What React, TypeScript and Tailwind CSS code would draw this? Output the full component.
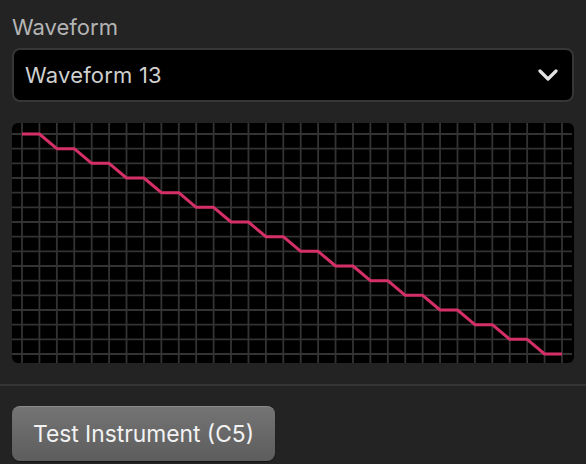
const samples = Array.from({ length: 32 }, (_, i) => 15 - Math.floor(i / 2));

const W = 560;
const H = 240;
const PAD_X = 10;
const TOP = 11;
const STEP_X = 540 / 31;
const STEP_Y = 220 / 15;

const WaveformCanvas = () => {
  const pts = samples.map((v, i) => `${(PAD_X + i * STEP_X).toFixed(2)},${(TOP + (15 - v) * STEP_Y).toFixed(2)}`).join(' ');
  return (
    <div className="h-[240px] w-full overflow-hidden rounded-md bg-black">
      <svg width={W} height={H} viewBox={`0 0 ${W} ${H}`}>
        {samples.map((_, i) => (
          <line key={`v${i}`} x1={PAD_X + i * STEP_X} y1={0} x2={PAD_X + i * STEP_X} y2={H} stroke="#333333" strokeWidth={1.8} />
        ))}
        {Array.from({ length: 16 }, (_, k) => (
          <line key={`h${k}`} x1={0} y1={TOP + k * STEP_Y} x2={W} y2={TOP + k * STEP_Y} stroke="#333333" strokeWidth={1.8} />
        ))}
        <polyline points={pts} fill="none" stroke="#d43067" strokeWidth={3} strokeLinejoin="round" />
      </svg>
    </div>
  );
};

export default function App() {
  return (
    <div className="h-[464px] w-[586px] overflow-hidden bg-[#232323] font-['Inter','Liberation_Sans',sans-serif]">
      <div className="px-3 pt-4">
        <div className="text-[22px] leading-none text-[#b4b4b4]">Waveform</div>

        <div className="mt-[10px] flex h-[54px] items-center justify-between rounded-lg border-2 border-[#363636] bg-black pl-[11px] pr-3">
          <span className="text-[22px] leading-none tracking-[0.2px] text-[#cfcfcf]">Waveform 13</span>
          <svg width="20" height="12" viewBox="0 0 20 12" className="mr-0.5">
            <path d="M2 2l8 8 8-8" fill="none" stroke="#e2e2e2" strokeWidth="3.2" strokeLinecap="round" strokeLinejoin="round" />
          </svg>
        </div>

        <div className="mt-[21px]">
          <WaveformCanvas />
        </div>
      </div>

      <div className="mt-[21px] h-[2px] w-full bg-[#343434]" />

      <div className="px-3 pt-5">
        <button className="flex h-[55px] w-[263px] items-center justify-center rounded-lg border-t border-[#8a8a8a] bg-gradient-to-b from-[#747474] to-[#5d5d5d] text-[22.8px] text-[#f2f2f2] shadow-[0_1px_1px_rgba(0,0,0,0.5)]">
          Test Instrument (C5)
        </button>
      </div>
    </div>
  );
}
